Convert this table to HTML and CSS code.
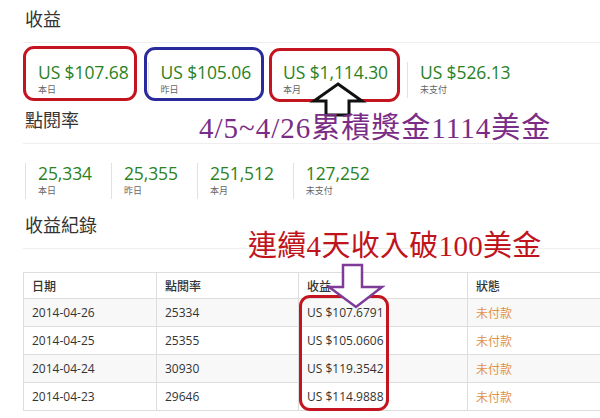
FILE: index.html
```html
<!DOCTYPE html>
<html lang="zh-Hant">
<head>
<meta charset="utf-8">
<title>收益</title>
<link rel="stylesheet" href="styles.css">
</head>
<body>
<div class="page">
  <h2 class="heading">收益</h2>
  <div class="stats stats-earn">
    <div class="stat"><div class="value">US $107.68</div><div class="label">本日</div></div>
    <div class="stat"><div class="value">US $105.06</div><div class="label">昨日</div></div>
    <div class="stat"><div class="value">US $1,114.30</div><div class="label">本月</div></div>
    <div class="stat"><div class="value">US $526.13</div><div class="label">未支付</div></div>
  </div>

  <h2 class="heading">點閱率</h2>
  <div class="stats stats-views">
    <div class="stat"><div class="value">25,334</div><div class="label">本日</div></div>
    <div class="stat"><div class="value">25,355</div><div class="label">昨日</div></div>
    <div class="stat"><div class="value">251,512</div><div class="label">本月</div></div>
    <div class="stat"><div class="value">127,252</div><div class="label">未支付</div></div>
  </div>

  <h2 class="heading">收益紀錄</h2>
  <table class="records">
    <colgroup>
      <col class="c-date"><col class="c-views"><col class="c-earn"><col class="c-status">
    </colgroup>
    <thead>
      <tr><th>日期</th><th>點閱率</th><th>收益</th><th>狀態</th></tr>
    </thead>
    <tbody>
      <tr><td>2014-04-26</td><td>25334</td><td>US $107.6791</td><td class="status">未付款</td></tr>
      <tr><td>2014-04-25</td><td>25355</td><td>US $105.0606</td><td class="status">未付款</td></tr>
      <tr><td>2014-04-24</td><td>30930</td><td>US $119.3542</td><td class="status">未付款</td></tr>
      <tr><td>2014-04-23</td><td>29646</td><td>US $114.9888</td><td class="status">未付款</td></tr>
    </tbody>
  </table>

  <!-- annotations drawn over the page -->
  <div class="mark mark-red mark-today"></div>
  <div class="mark mark-blue mark-yesterday"></div>
  <div class="mark mark-red mark-month"></div>
  <div class="mark mark-red mark-income"></div>

  <svg class="arrow" width="600" height="418" viewBox="0 0 600 418">
    <polygon points="338,84 362,101 349,101 349,115 326,115 326,101 314,101" fill="#fff" stroke="#111" stroke-width="3" stroke-linejoin="miter"/>
    <polygon points="343,265 362,265 362,287 382,287 356,307 329,287 343,287" fill="#fff" stroke="#7e3b98" stroke-width="2.5" stroke-linejoin="miter"/>
  </svg>

  <div class="note note-purple">4/5~4/26累積獎金1114美金</div>
  <div class="note note-red">連續4天收入破100美金</div>
</div>
</body>
</html>
```

FILE: styles.css
```css
html, body {
  margin: 0;
  padding: 0;
  background: #fff;
}

body {
  font-family: "Open Sans", "Noto Sans CJK TC", sans-serif;
  color: #333;
  overflow: hidden;
}

.page {
  position: relative;
  width: 600px;
  height: 418px;
  overflow: hidden;
  padding: 5px 0 0 23px;
  box-sizing: border-box;
}

.heading {
  margin: 0;
  padding: 0 0 11px 2px;
  font-family: "Noto Sans CJK TC", sans-serif;
  font-weight: 400;
  font-size: 18px;
  line-height: 26px;
  color: #333;
  border-bottom: 1px solid #eeeeee;
  margin-right: -23px;
}

.stats {
  display: flex;
  padding-left: 2px;
  margin-top: 19px;
}

.stats-earn { margin-bottom: 8px; }
.stats-views { margin-bottom: 12px; }

.stat {
  border-left: 1px solid #e2e2e2;
  padding: 0 19px 2px 12px;
}

.value {
  font-family: "Open Sans", sans-serif;
  font-size: 17.5px;
  letter-spacing: -0.1px;
  line-height: 20px;
  color: #2a821e;
  white-space: nowrap;
}

.label {
  margin-top: 2px;
  font-family: "Noto Sans CJK TC", sans-serif;
  font-size: 9px;
  line-height: 12px;
  color: #666;
}

.records {
  margin-top: 23px;
  width: 640px;
  border-collapse: collapse;
  table-layout: fixed;
  font-size: 12px;
  color: #333;
}

.c-date { width: 133px; }
.c-views { width: 142px; }
.c-earn { width: 169px; }
.c-status { width: 196px; }

.records th,
.records td {
  border: 1px solid #dddddd;
  text-align: left;
  padding: 4px 8px;
  line-height: 17px;
  white-space: nowrap;
}

.records th {
  font-family: "Noto Sans CJK TC", sans-serif;
  font-weight: 500;
  font-size: 12px;
  padding-top: 4px;
  padding-bottom: 4px;
}

.records td {
  font-family: "Open Sans", "Noto Sans CJK TC", sans-serif;
  padding-top: 5px;
  padding-bottom: 5px;
}

.records tbody tr:nth-child(odd) td {
  background: #f8f8f8;
}

.records td.status {
  font-family: "Noto Sans CJK TC", sans-serif;
  color: #e0914c;
}

/* annotation overlays */
.mark {
  position: absolute;
  border: 3px solid #c4141f;
  border-radius: 11px;
  box-sizing: border-box;
}

.mark-blue { border-color: #2b2a9c; }

.mark-today { left: 23px; top: 46px; width: 114px; height: 55px; }
.mark-yesterday { left: 144px; top: 47px; width: 120px; height: 54px; }
.mark-month { left: 269px; top: 48px; width: 131px; height: 54px; }
.mark-income { left: 299px; top: 295px; width: 90px; height: 116px; }

.arrow {
  position: absolute;
  left: 0;
  top: 0;
}

.note {
  position: absolute;
  font-family: "Liberation Serif", "Noto Sans CJK TC", serif;
  font-size: 29px;
  line-height: 30px;
  white-space: nowrap;
}

.note-purple {
  left: 199px;
  top: 113px;
  letter-spacing: 1px;
  color: #7a2d86;
}

.note-red {
  left: 248px;
  top: 231px;
  letter-spacing: 0.3px;
  color: #c0141c;
}
```
